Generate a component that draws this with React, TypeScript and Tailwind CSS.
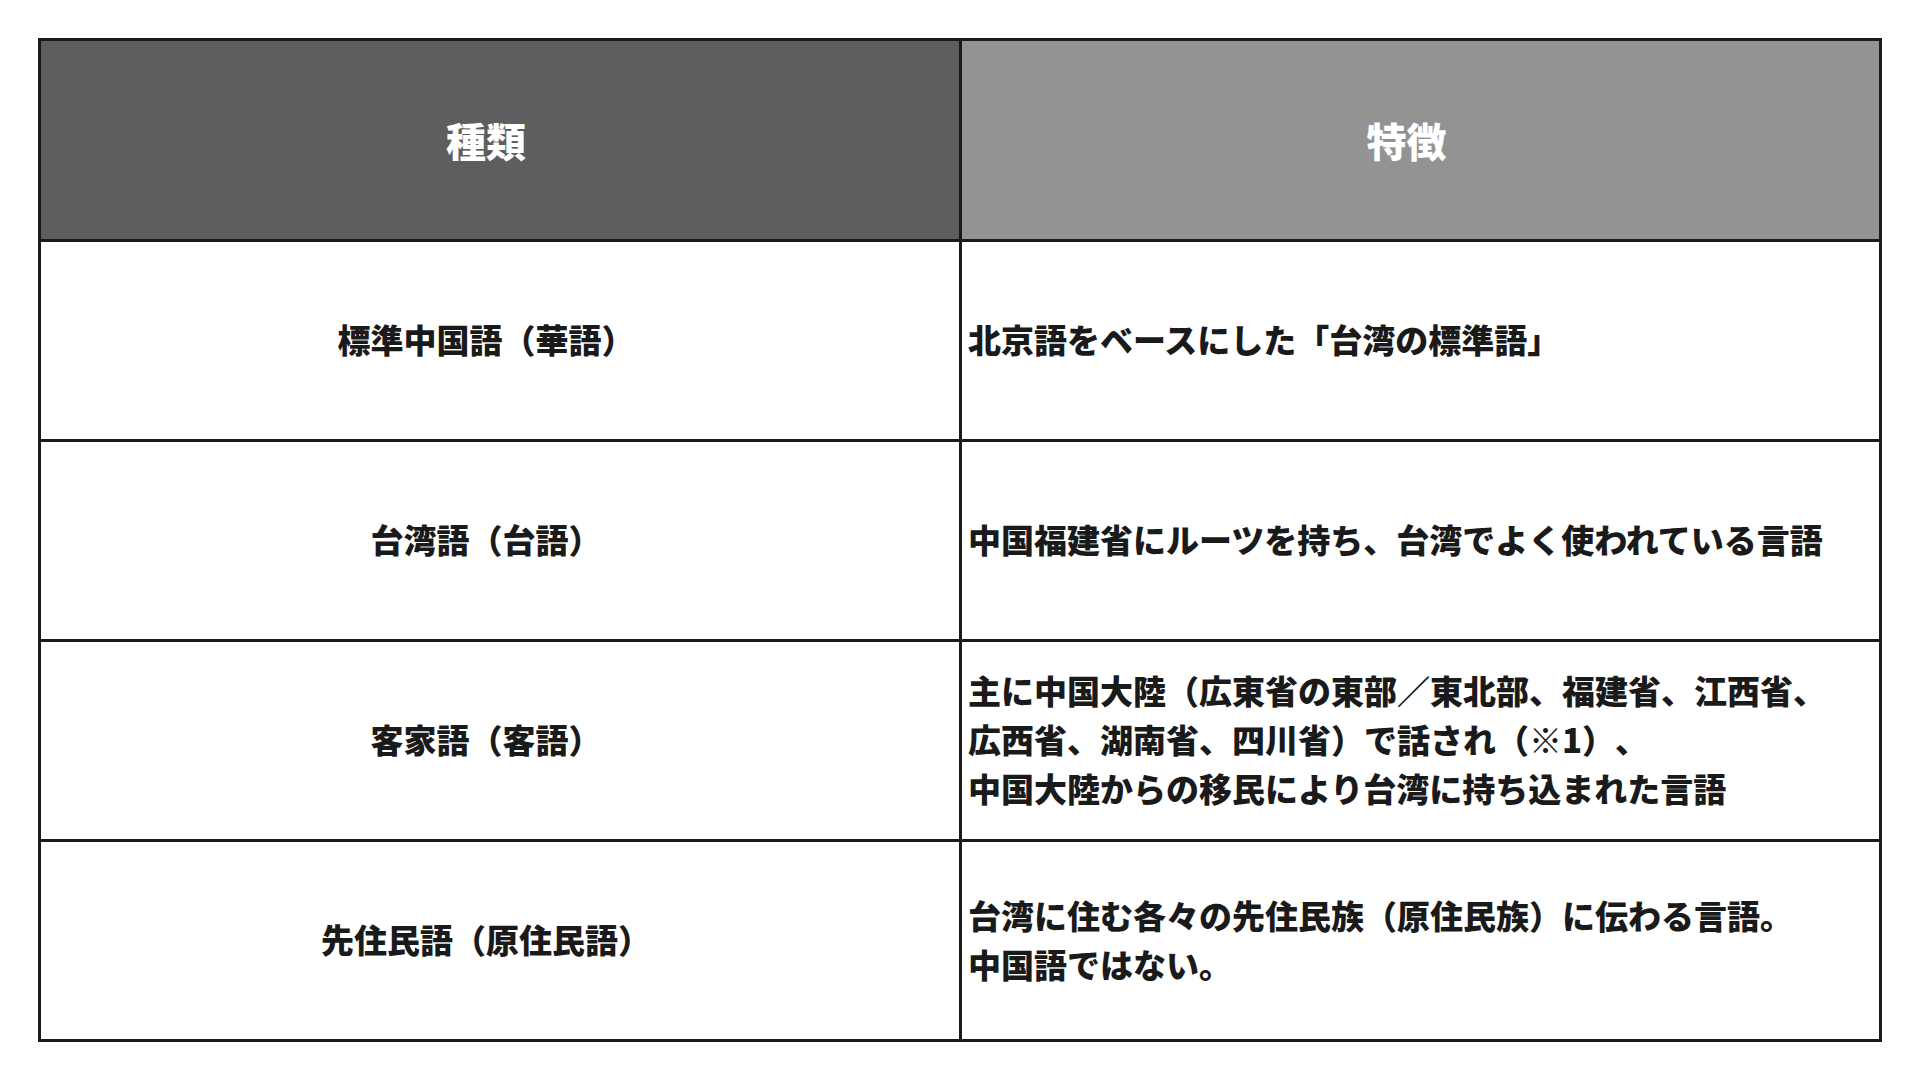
const rows: { kind: string; lines: string[] }[] = [
  { kind: "標準中国語（華語）", lines: ["北京語をベースにした「台湾の標準語」"] },
  { kind: "台湾語（台語）", lines: ["中国福建省にルーツを持ち、台湾でよく使われている言語"] },
  {
    kind: "客家語（客語）",
    lines: [
      "主に中国大陸（広東省の東部／東北部、福建省、江西省、",
      "広西省、湖南省、四川省）で話され（※1）、",
      "中国大陸からの移民により台湾に持ち込まれた言語",
    ],
  },
  {
    kind: "先住民語（原住民語）",
    lines: ["台湾に住む各々の先住民族（原住民族）に伝わる言語。", "中国語ではない。"],
  },
];

export default function App() {
  return (
    <div
      className="min-h-screen w-[1920px] bg-white pt-[38px] pl-[38px] [text-spacing-trim:space-all]"
      style={{ fontFamily: '"Noto Sans CJK JP", "Noto Sans", sans-serif' }}
    >
      <div className="w-[1844px] border-[3px] border-[#1a1a1a] font-black">
        {/* header */}
        <div className="grid grid-cols-[921px_1fr] border-b-[3px] border-[#1a1a1a]">
          <div className="flex h-[198px] items-center justify-center border-r-[3px] border-[#1a1a1a] bg-[#5e5e5e] pl-[6px] pr-[34px] text-[40px] text-white">
            種類
          </div>
          <div className="flex h-[198px] items-center justify-center bg-[#939393] pl-[6px] pr-[34px] text-[40px] text-white">
            特徴
          </div>
        </div>

        {/* body rows */}
        {rows.map((row, i) => (
          <div
            key={row.kind}
            className={
              i < rows.length - 1
                ? "grid grid-cols-[921px_1fr] border-b-[3px] border-[#1a1a1a]"
                : "grid grid-cols-[921px_1fr]"
            }
          >
            <div className="flex h-[197px] items-center justify-center border-r-[3px] border-[#1a1a1a] pb-[2px] pl-[6px] pr-[34px] text-[33px] text-[#1a1a1a]">
              {row.kind}
            </div>
            <div className="flex h-[197px] flex-col justify-center pb-[2px] pl-[6px] pr-[10px] text-[33px] leading-[49px] text-[#1a1a1a]">
              {row.lines.map((line) => (
                <div key={line} className="whitespace-nowrap">
                  {line}
                </div>
              ))}
            </div>
          </div>
        ))}
      </div>
    </div>
  );
}
